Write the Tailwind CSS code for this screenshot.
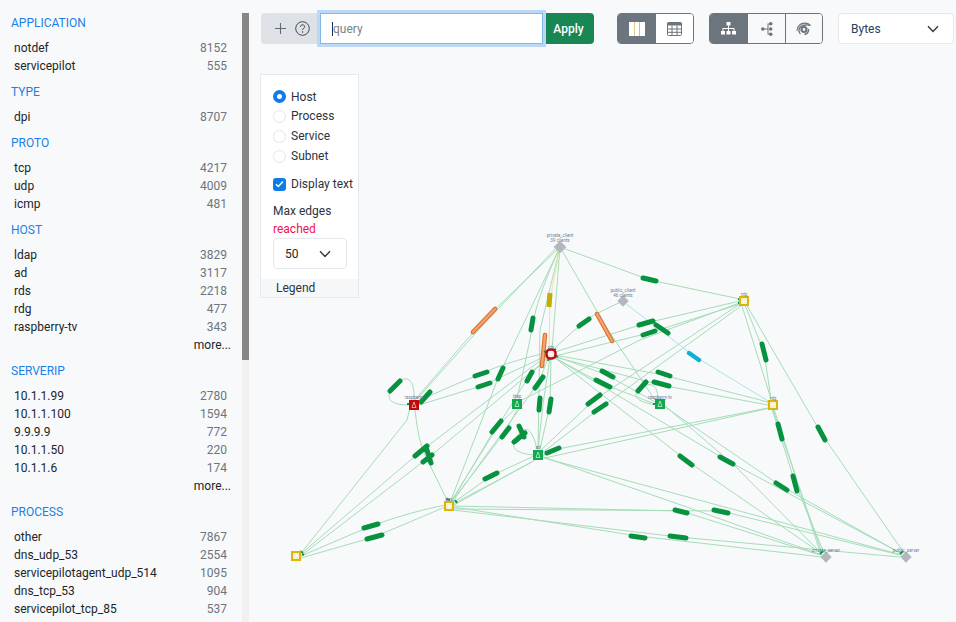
<!doctype html>
<html lang="en">
<head>
<meta charset="utf-8">
<title>Network map</title>
<script src="https://cdn.jsdelivr.net/npm/@tailwindcss/browser@4"></script>
</head>
<body class="bg-[#f8f9fb] overflow-hidden font-['Roboto',sans-serif] text-[12px] text-[#212529]">
<div class="flex w-[956px] h-[622px] relative">
  <!-- sidebar -->
  <aside class="w-[242px] h-[622px] overflow-hidden pt-[14px] pl-[11px] pr-[11px] shrink-0 leading-[18px]">
    <h3 class="text-[#1b7fe6] mb-[7px]">APPLICATION</h3>
    <ul class="pl-[3px] mb-[8px]">
      <li class="flex justify-between h-[18px]"><span>notdef</span><span class="text-[#6c757d] pr-[4px]">8152</span></li>
      <li class="flex justify-between h-[18px]"><span>servicepilot</span><span class="text-[#6c757d] pr-[4px]">555</span></li>
    </ul>
    <h3 class="text-[#1b7fe6] mb-[7px]">TYPE</h3>
    <ul class="pl-[3px] mb-[8px]">
      <li class="flex justify-between h-[18px]"><span>dpi</span><span class="text-[#6c757d] pr-[4px]">8707</span></li>
    </ul>
    <h3 class="text-[#1b7fe6] mb-[7px]">PROTO</h3>
    <ul class="pl-[3px] mb-[8px]">
      <li class="flex justify-between h-[18px]"><span>tcp</span><span class="text-[#6c757d] pr-[4px]">4217</span></li>
      <li class="flex justify-between h-[18px]"><span>udp</span><span class="text-[#6c757d] pr-[4px]">4009</span></li>
      <li class="flex justify-between h-[18px]"><span>icmp</span><span class="text-[#6c757d] pr-[4px]">481</span></li>
    </ul>
    <h3 class="text-[#1b7fe6] mb-[7px]">HOST</h3>
    <ul class="pl-[3px] mb-[8px]">
      <li class="flex justify-between h-[18px]"><span>ldap</span><span class="text-[#6c757d] pr-[4px]">3829</span></li>
      <li class="flex justify-between h-[18px]"><span>ad</span><span class="text-[#6c757d] pr-[4px]">3117</span></li>
      <li class="flex justify-between h-[18px]"><span>rds</span><span class="text-[#6c757d] pr-[4px]">2218</span></li>
      <li class="flex justify-between h-[18px]"><span>rdg</span><span class="text-[#6c757d] pr-[4px]">477</span></li>
      <li class="flex justify-between h-[18px]"><span>raspberry-tv</span><span class="text-[#6c757d] pr-[4px]">343</span></li>
      <li class="flex justify-end h-[18px]"><span>more...</span></li>
    </ul>
    <h3 class="text-[#1b7fe6] mb-[7px]">SERVERIP</h3>
    <ul class="pl-[3px] mb-[8px]">
      <li class="flex justify-between h-[18px]"><span>10.1.1.99</span><span class="text-[#6c757d] pr-[4px]">2780</span></li>
      <li class="flex justify-between h-[18px]"><span>10.1.1.100</span><span class="text-[#6c757d] pr-[4px]">1594</span></li>
      <li class="flex justify-between h-[18px]"><span>9.9.9.9</span><span class="text-[#6c757d] pr-[4px]">772</span></li>
      <li class="flex justify-between h-[18px]"><span>10.1.1.50</span><span class="text-[#6c757d] pr-[4px]">220</span></li>
      <li class="flex justify-between h-[18px]"><span>10.1.1.6</span><span class="text-[#6c757d] pr-[4px]">174</span></li>
      <li class="flex justify-end h-[18px]"><span>more...</span></li>
    </ul>
    <h3 class="text-[#1b7fe6] mb-[7px]">PROCESS</h3>
    <ul class="pl-[3px] mb-[8px]">
      <li class="flex justify-between h-[18px]"><span>other</span><span class="text-[#6c757d] pr-[4px]">7867</span></li>
      <li class="flex justify-between h-[18px]"><span>dns_udp_53</span><span class="text-[#6c757d] pr-[4px]">2554</span></li>
      <li class="flex justify-between h-[18px]"><span>servicepilotagent_udp_514</span><span class="text-[#6c757d] pr-[4px]">1095</span></li>
      <li class="flex justify-between h-[18px]"><span>dns_tcp_53</span><span class="text-[#6c757d] pr-[4px]">904</span></li>
      <li class="flex justify-between h-[18px]"><span>servicepilot_tcp_85</span><span class="text-[#6c757d] pr-[4px]">537</span></li>
    </ul>
  </aside>
  <!-- scrollbar -->
  <div class="w-[7px] mt-[13px] h-[609px] bg-[#f1f1f1] shrink-0"><div class="h-[347px] bg-[#878787]"></div></div>

  <!-- main -->
  <main class="flex-1 pl-[12px] pt-[13px] min-w-0">
    <div class="flex items-start h-[31px]">
      <div class="flex w-[333px] h-[31px]">
        <div class="w-[59px] bg-[#dee2e6] rounded-l-[4px] flex items-center pl-[13px] gap-[8px] text-[#495057]">
          <svg width="13" height="13" viewBox="0 0 13 13" fill="none" stroke="#5f6b76" stroke-width="1.100"><path d="M6.500 1v11M1 6.500h11"/></svg>
          <svg width="15" height="15" viewBox="0 0 15 15" fill="none" stroke="#3f4850" stroke-width="1"><circle cx="7.500" cy="7.500" r="6.800"/><path d="M5.400 5.800c.1-1.300 1-2 2.200-2s2.100.8 2.100 1.900c0 1.600-2.100 1.600-2.100 3.200"/><circle cx="7.600" cy="11" r=".4"/></svg>
        </div>
        <div class="w-[223px] h-[31px] bg-white border border-[#7fb9ec] shadow-[0_0_0_3px_#bcd8f5] relative z-10 flex items-center pl-[11px] text-[#7a8289]">
          <span class="w-px h-[14px] bg-[#0f2f66]"></span><span>query</span>
        </div>
        <button class="w-[51px] h-[31px] bg-[#198754] text-white font-medium rounded-r-[4px] text-[12px]">Apply</button>
      </div>

      <div class="flex ml-[23px] w-[77px] h-[31px] rounded-[4px] border border-[#6c757d] overflow-hidden">
        <div class="w-[38px] bg-[#6c757d] flex items-center justify-center">
          <svg width="16" height="16" viewBox="0 0 16 16"><rect x="0" y="1" width="16" height="14" fill="#fff"/><path d="M5.500 1v14" stroke="#e8c98a" stroke-width="1"/><path d="M10.500 1v14" stroke="#9cc6e8" stroke-width="1"/></svg>
        </div>
        <div class="flex-1 bg-white flex items-center justify-center">
          <svg width="15" height="14" viewBox="0 0 15 14"><rect x=".5" y=".5" width="14" height="13" rx="1" fill="#fff" stroke="#6c757d"/><rect x=".5" y=".5" width="14" height="3" fill="#6c757d"/><path d="M.5 7h14M.5 10.300h14M5 3.500v10M10 3.500v10" stroke="#6c757d" stroke-width="1"/></svg>
        </div>
      </div>

      <div class="flex ml-[15px] w-[114px] h-[31px] rounded-[4px] border border-[#6c757d] overflow-hidden">
        <div class="w-[37px] bg-[#6c757d] flex items-center justify-center">
          <svg width="15" height="13" viewBox="0 0 15 13" fill="#fff"><rect x="5.500" y="0" width="4" height="3.500"/><rect x="0" y="9" width="4" height="3.500"/><rect x="5.500" y="9" width="4" height="3.500"/><rect x="11" y="9" width="4" height="3.500"/><path d="M7 3.500h1V6h5.500v3h-1V7h-4.500v2H7V7H2.500v2h-1V6H7z"/></svg>
        </div>
        <div class="w-[38px] bg-[#f8f9fb] border-l border-[#6c757d] flex items-center justify-center">
          <svg width="12" height="14" viewBox="0 0 12 14" fill="#6c757d"><circle cx="1.800" cy="7" r="1.800"/><circle cx="9.700" cy="1.800" r="1.800"/><circle cx="9.700" cy="7" r="1.800"/><circle cx="9.700" cy="12.200" r="1.800"/><path d="M3 6.500h3.500V1.500h2v1h-1v9h1v1h-2V7.500H3z"/></svg>
        </div>
        <div class="flex-1 bg-[#f8f9fb] border-l border-[#6c757d] flex items-center justify-center">
          <svg width="16" height="14" viewBox="0 0 16 14" fill="none" stroke="#6c757d"><circle cx="8" cy="7.500" r="2.500" stroke-width="2.200"/><path d="M1 8.500C1.200 4 4.500 1.200 8.500 1.200c2.500 0 4.500 .8 6 2.300C12.500 2.800 7 2.500 4 5.500 2.500 7 2.800 10.500 4.500 12" stroke-width="1.200" fill="#6c757d" fill-opacity=".35"/><path d="M12.500 7c.5 2.500-1 5-4 5.500" stroke-width="1.400"/></svg>
        </div>
      </div>

      <div class="ml-[15px] w-[116px] h-[31px] bg-white border border-[#e6e8ec] rounded-[4px] flex items-center justify-between pl-[12px] pr-[14px]">
        <span class="text-[#24405f]">Bytes</span>
        <svg width="12" height="8" viewBox="0 0 12 8" fill="none" stroke="#343a40" stroke-width="1.400"><path d="M1 1.200 6 6.500l5-5.300"/></svg>
      </div>
    </div>

    <!-- options panel -->
    <div class="mt-[30px] -ml-[1px] w-[99px] h-[224px] bg-white border border-[#e6e9ee] flex flex-col">
      <div class="flex-1 pl-[12px] pt-[12px]">
        <div class="flex items-center h-[19px] gap-[5px]"><span class="w-[13px] h-[13px] rounded-full border-[4px] border-[#0d7ce8] bg-white"></span><span class="text-[#2b3440]">Host</span></div>
        <div class="flex items-center h-[20px] gap-[5px]"><span class="w-[13px] h-[13px] rounded-full border border-[#e3e5e8] bg-white"></span><span class="text-[#2b3440]">Process</span></div>
        <div class="flex items-center h-[20px] gap-[5px]"><span class="w-[13px] h-[13px] rounded-full border border-[#e3e5e8] bg-white"></span><span class="text-[#2b3440]">Service</span></div>
        <div class="flex items-center h-[20px] gap-[5px]"><span class="w-[13px] h-[13px] rounded-full border border-[#e3e5e8] bg-white"></span><span class="text-[#2b3440]">Subnet</span></div>
        <div class="flex items-center h-[20px] gap-[5px] mt-[8px]">
          <span class="w-[13px] h-[13px] rounded-[3px] bg-[#0d7ce8] flex items-center justify-center"><svg width="9" height="8" viewBox="0 0 9 8" fill="none" stroke="#fff" stroke-width="1.500"><path d="M1 4.200 3.300 6.500 8 1.500"/></svg></span>
          <span class="text-[#2b3440]">Display text</span>
        </div>
        <div class="mt-[8px] leading-[18px] text-[#2b3440]">Max edges</div>
        <div class="leading-[18px] text-[#f0134d]">reached</div>
        <div class="w-[74px] h-[31px] border border-[#e6e8ec] rounded-[4px] flex items-center justify-between pl-[11px] pr-[15px]">
          <span>50</span>
          <svg width="12" height="8" viewBox="0 0 12 8" fill="none" stroke="#343a40" stroke-width="1.400"><path d="M1 1.200 6 6.500l5-5.300"/></svg>
        </div>
      </div>
      <div class="h-[18px] bg-[#f6f7f9] pl-[15px] leading-[18px] text-[#2b3440]">Legend</div>
    </div>
  </main>

  <!-- diagram canvas: free positioned graph -->
  <svg class="absolute left-0 top-0 pointer-events-none" width="956" height="622" viewBox="0 0 956 622" fill="none" font-family="Roboto, sans-serif">
    <!-- green edges -->
    <path stroke="#a6dcb8" stroke-width="1" d="
      M560 247 L484 320 L412 403
      M557 247 L482 326 L417 399
      M560 247 Q536 300 533 324 Q524 370 517 398
      M560 247 L606 327 L655 400
      M560 247 L650 280 L740 299
      M560 247 L552 350
      M560 247 L540 330 L538 450
      M560 247 L500 373 L451 500
      M623 301 Q590 316 584 322 Q565 338 553 350
      M555 352 L646 323 L740 301
      M555 356 L649 333 L740 304
      M545 353 Q500 364 481 374 Q440 390 418 402
      M546 356 L484 385 L419 405
      M547 358 L529 376 L452 500
      M548 358 L539 382 L453 501
      M550 358 L543 404 L538 450
      M551 358 L550 405 L540 449
      M555 356 L607 375 L655 402
      M555 358 L603 384 L655 404
      M555 355 L663 375 L768 402
      M555 357 L661 385 L768 405
      M555 358 L686 460 L822 554
      M555 358 L726 460 L902 554
      M540 451 L594 400 L740 304
      M542 453 L600 408 L741 306
      M522 400 L640 340 L742 302
      M452 501 L496 427 L515 409
      M452 501 L505 432 L518 408
      M453 503 L491 476 L534 456
      M453 504 L532 462
      M454 505 L553 450 L773 407
      M545 458 L775 407
      M453 506 L681 511 L820 555
      M453 509 L721 511 L900 555
      M543 457 L681 505 L822 555
      M544 458 L721 506 L902 555
      M453 507 L638 536 L822 557
      M453 510 L678 537 L900 557
      M302 552 L407 420 L410 408
      M302 553 L421 451 L545 357
      M302 555 L428 458 L548 358
      M301 556 L371 526 Q410 512 445 505
      M301 558 L374 537 Q410 522 445 507
      M415 410 Q418 440 425 455 L447 500
      M665 407 L781 486 L902 554
      M664 405 L734 465 L822 554
      M745 305 L764 352 L771 399
      M742 306 L771 399
      M746 304 L821 433 L904 553
      M773 409 L780 431 L822 553
      M772 409 L795 483 L824 553
      M774 409 L820 552
      M409 405 C396 405 386 402 390 392 M400 381 C410 374 415 385 414 400
      M533 455 Q505 452 517 436 Q530 418 537 449
      M656 405 Q625 400 642 386 Q658 380 658 399
    "/>
    <!-- yellow and blue thin edges -->
    <path stroke="#efe2a0" stroke-width="1" d="M560 247 L550 300 L549 350"/>
    <path stroke="#a9e3ef" stroke-width="1" d="M625 303 L694 356 L770 402"/>
    <!-- orange bars -->
    <path stroke="#dd6f2c" stroke-width="4.500" stroke-linecap="round" d="M473 332 L495 309 M545 335 L542 366 M597 314 L612 341"/>
    <path stroke="#f2a56d" stroke-width="2.300" stroke-linecap="round" d="M473 332 L495 309 M545 335 L542 366 M597 314 L612 341"/>
    <path stroke="#c3ae00" stroke-width="5" stroke-linecap="butt" d="M550 293 L549 307"/>
    <path stroke="#0fb0d2" stroke-width="4.500" stroke-linecap="round" d="M689 353 L699 360"/>
    <!-- green bars -->
    <path stroke="#06923e" stroke-width="5" stroke-linecap="round" d="
      M643 278 L656 281 M533 318 L531 330 M579 326 L589 319 M639 325 L653 321 M643 335 L655 331 M656 325 L668 333
      M390 391 L400 381 M421 402 L430 392 M475 376 L487 372 M478 387 L490 383 M498 379 L503 368 M527 381 L532 372
      M535 388 L543 377 M539 410 L540 398 M549 412 L551 399 M602 371 L613 377 M596 380 L610 387 M638 391 L646 382
      M658 372 L670 376 M654 382 L669 386 M588 404 L600 395 M594 412 L606 404
      M415 456 L427 446 M423 462 L432 455 M426 447 L431 463
      M492 432 L501 421 M502 437 L509 428 M514 442 L525 433 M519 426 L524 437 M547 453 L559 448 M485 479 L497 473
      M364 528 L378 524 M367 539 L382 535
      M762 344 L766 360 M778 424 L782 439 M818 427 L825 440 M793 476 L797 491 M776 483 L787 490
      M720 457 L733 464 M680 456 L692 465 M675 510 L687 513 M714 510 L728 513 M670 536 L686 538 M631 536 L645 538
    "/>
    <!-- arrow tips -->
    <path stroke="#0a9a48" stroke-width="2" d="M544 351 L547 353 M548 361 L549 358 M556 349 L553 351 M556 356 L558 357 M738 299 L741 300 M738 303 L741 303 M768 402 L770 403 M768 405 L770 405 M655 404 L653 404 M300 551 L303 553 M302 554 L304 555 M446 499 L450 500 M455 500 L457 503 M820 554 L823 551 M900 554 L903 551 M409 404 L407 404"/>

    <!-- nodes -->
    <rect x="555.500" y="242.500" width="9" height="9" fill="#b3b8bd" transform="rotate(45 560 247)"/>
    <rect x="619" y="297" width="8" height="8" fill="#b3b8bd" transform="rotate(45 623 301)"/>
    <rect x="822" y="553" width="8" height="8" fill="#b3b8bd" transform="rotate(45 826 557)"/>
    <rect x="902" y="553" width="8" height="8" fill="#b3b8bd" transform="rotate(45 906 557)"/>

    <rect x="409" y="400" width="10" height="10" fill="#bf0a0a"/>
    <path d="M414 402 L416 407.500 H412z" stroke="#fff" stroke-width=".6"/>
    <rect x="512" y="399" width="10" height="10" fill="#11a84f"/>
    <path d="M517 401 L519 406.500 H515z" stroke="#fff" stroke-width=".6"/>
    <rect x="533" y="450" width="10" height="10" fill="#11a84f"/>
    <path d="M538 452 L540 457.500 H536z" stroke="#fff" stroke-width=".6"/>
    <rect x="655" y="399" width="10" height="10" fill="#11a84f"/>
    <path d="M660 401 L662 406.500 H658z" stroke="#fff" stroke-width=".6"/>

    <rect x="546.500" y="349.500" width="9" height="9" rx="3.500" fill="#f5e8dc" stroke="#bd0b16" stroke-width="2.500"/>
    <path d="M548 354h6M551 351v6" stroke="#fff" stroke-width=".7"/>

    <rect x="740" y="297" width="8" height="8" fill="#f7efcf" stroke="#e0b400" stroke-width="2" stroke-linejoin="miter"/>
    <path d="M741 301h6M744 298v6" stroke="#fff" stroke-width=".8"/>
    <rect x="769" y="401" width="8" height="8" fill="#f7efcf" stroke="#e0b400" stroke-width="2" stroke-linejoin="miter"/>
    <path d="M770 405h6M773 402v6" stroke="#fff" stroke-width=".8"/>
    <rect x="445" y="502" width="8" height="8" fill="#f7efcf" stroke="#e0b400" stroke-width="2" stroke-linejoin="miter"/>
    <path d="M446 506h6M449 503v6" stroke="#fff" stroke-width=".8"/>
    <rect x="292" y="552" width="8" height="8" fill="#f7efcf" stroke="#e0b400" stroke-width="2" stroke-linejoin="miter"/>
    <path d="M293 556h6M296 553v6" stroke="#fff" stroke-width=".8"/>

    <!-- labels -->
    <g fill="#6a7f9c" font-size="4.500" text-anchor="middle">
      <text x="560" y="237">private_client</text>
      <text x="560" y="241.500">39 clients</text>
      <text x="623" y="292">public_client</text>
      <text x="623" y="296.500">46 clients</text>
      <text x="414" y="399">raspberry</text>
      <text x="517" y="398">ldap</text>
      <text x="538" y="449">ad</text>
      <text x="660" y="399">raspberry-tv</text>
      <text x="551" y="349">rds</text>
      <text x="744" y="296">rdg</text>
      <text x="773" y="400">rdg</text>
      <text x="449" y="501">dns</text>
      <text x="826" y="552">private_server</text>
      <text x="906" y="552">public_server</text>
    </g>
  </svg>
</div>
</body>
</html>
